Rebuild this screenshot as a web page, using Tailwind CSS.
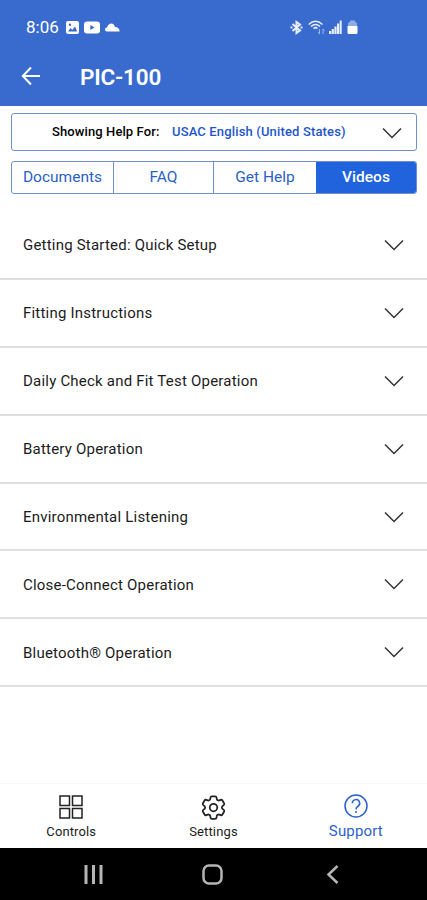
<!DOCTYPE html>
<html lang="en">
  <head>
    <meta charset="UTF-8" />
    <meta name="viewport" content="width=device-width, initial-scale=1.0" />
    <title>PIC-100 Support</title>
    <script src="https://cdn.jsdelivr.net/npm/@tailwindcss/browser@4"></script>
  </head>
  <body class="bg-white font-['Roboto',sans-serif] text-[#1c1c1c]">
    <div class="flex flex-col w-[427px] h-[900px] overflow-hidden">
      <header class="h-[106px] shrink-0 bg-[#396bce] text-white">
        <!-- Status bar -->
        <div class="flex items-center h-[54px] pl-[26px] pr-[69px]">
          <span class="w-[33px] text-[17px] leading-none">8:06</span>
          <svg class="ml-[7px]" width="13" height="13" viewBox="0 0 13 13">
            <rect width="13" height="13" rx="2" fill="#fff" />
            <path d="M2 10.5 4.5 7l1.8 2L9 5.5l2.2 5z" fill="#396bce" />
            <circle cx="4" cy="3.8" r="1.2" fill="#396bce" />
          </svg>
          <svg class="ml-[5px]" width="16" height="13" viewBox="0 0 16 13">
            <rect y="0.5" width="16" height="12" rx="3" fill="#fff" />
            <path d="M6.3 4v5l4.200-2.500z" fill="#396bce" />
          </svg>
          <svg class="ml-[5px]" width="15" height="9" viewBox="0 0 15 9">
            <path d="M2 8.500a2 2 0 0 1 0-4Q3.500 0.500 6.500 0.500 9 0.500 10 4q4.300 0 4.600 4.500z" fill="#fff" />
          </svg>
          <svg class="ml-auto" width="13" height="15" viewBox="0 0 13 15" fill="none" stroke="#e6eefb" stroke-width="2">
            <path d="M2.500 4 10 10.500 6.500 13V2L10 4.500 2.500 11" />
            <path d="M0.500 7.500h2M10.500 7.500h2" />
          </svg>
          <svg class="ml-[5px]" width="17" height="15" viewBox="0 0 17 15" fill="none" stroke="#e6eefb" stroke-width="1.500">
            <path d="M0.700 4.500Q7.500-2 14.500 4.500M3 6.500q4.500-4 9 0M5.500 8.500Q7.500 6.800 9.500 8.500" />
            <path d="M11.500 9v5M9.800 12l1.700 1.700M15 14V9M15 9l1.500 1.500" stroke="#9db8ea" stroke-width="1" />
          </svg>
          <svg class="ml-[4px]" width="13" height="14" viewBox="0 0 13 14" fill="#e6eefb">
            <path d="M0 11h2.200v3H0zM2.700 9h2.200v5H2.700zM5.400 6.500h2.200V14H5.400zM8 3.500h2.200V14H8zM10.700 0.500h2V14h-2z" />
          </svg>
          <svg class="ml-[5px]" width="11" height="14" viewBox="0 0 11 14">
            <path d="M1 6V3.500Q1 2 3 2V0.500h5V2q2 0 2 1.500V6z" fill="#8fade6" />
            <path d="M0.500 6h10v6.500q0 1.500-1.500 1.500H2q-1.500 0-1.500-1.500z" fill="#fff" />
          </svg>
        </div>
        <!-- Title bar -->
        <div class="flex items-center h-[44px] pl-[21px]">
          <svg width="20" height="20" viewBox="0 0 20 20" fill="none" stroke="#fff" stroke-width="2">
            <path d="M19 10H2.500M10 1.500 1.800 10 10 18.500" />
          </svg>
          <h1 class="ml-[39px] mt-[2px] text-[22.500px] font-semibold leading-none tracking-[-0.200px]">PIC-100</h1>
        </div>
      </header>

      <div class="pl-[11px] pr-[10px] pt-[7px] shrink-0">
        <button class="flex items-center w-full h-[38px] border border-[#6f8fce] rounded-[3px] pl-[40px] pr-[14px] text-[13px] font-medium">
          <span class="w-[120px] text-left text-black whitespace-nowrap tracking-[0.1px]">Showing Help For:</span>
          <span class="text-[#1d56cb] whitespace-nowrap tracking-[0.15px]">USAC English (United States)</span>
          <svg class="ml-auto mt-px" width="20" height="12" viewBox="0 0 20 12" fill="none" stroke="#333" stroke-width="1.500">
            <path d="M1 1.500 10 10.500 19 1.500" />
          </svg>
        </button>
        <div class="flex mt-[10px] h-[33px] border border-[#6f8fce] rounded-[3px] text-[15.500px] text-[#2c5fc4] overflow-hidden">
          <button class="w-[102px] border-r border-[#6f8fce]">Documents</button>
          <button class="w-[100px] border-r border-[#6f8fce]">FAQ</button>
          <button class="w-[102px]">Get Help</button>
          <button class="flex-1 bg-[#2063dc] text-white font-medium">Videos</button>
        </div>
      </div>

      <!-- Video topics -->
      <ul class="mt-[18px] flex-1 text-[15px] tracking-[0.21px]">
        <li class="flex items-center justify-between h-[67.900px] pl-[23px] pr-[23px] border-b-2 border-[#dedede]">
          <span class="pt-px">Getting Started: Quick Setup</span>
          <svg width="20" height="12" viewBox="0 0 20 12" fill="none" stroke="#333" stroke-width="1.500"><path d="M1 1.500 10 10.500 19 1.500" /></svg>
        </li>
        <li class="flex items-center justify-between h-[67.900px] pl-[23px] pr-[23px] border-b-2 border-[#dedede]">
          <span class="pt-px">Fitting Instructions</span>
          <svg width="20" height="12" viewBox="0 0 20 12" fill="none" stroke="#333" stroke-width="1.500"><path d="M1 1.500 10 10.500 19 1.500" /></svg>
        </li>
        <li class="flex items-center justify-between h-[67.900px] pl-[23px] pr-[23px] border-b-2 border-[#dedede]">
          <span class="pt-[2px]">Daily Check and Fit Test Operation</span>
          <svg width="20" height="12" viewBox="0 0 20 12" fill="none" stroke="#333" stroke-width="1.500"><path d="M1 1.500 10 10.500 19 1.500" /></svg>
        </li>
        <li class="flex items-center justify-between h-[67.900px] pl-[23px] pr-[23px] border-b-2 border-[#dedede]">
          <span class="pt-[2px]">Battery Operation</span>
          <svg width="20" height="12" viewBox="0 0 20 12" fill="none" stroke="#333" stroke-width="1.500"><path d="M1 1.500 10 10.500 19 1.500" /></svg>
        </li>
        <li class="flex items-center justify-between h-[67.900px] pl-[23px] pr-[23px] border-b-2 border-[#dedede]">
          <span class="pt-[2px]">Environmental Listening</span>
          <svg width="20" height="12" viewBox="0 0 20 12" fill="none" stroke="#333" stroke-width="1.500"><path d="M1 1.500 10 10.500 19 1.500" /></svg>
        </li>
        <li class="flex items-center justify-between h-[67.900px] pl-[23px] pr-[23px] border-b-2 border-[#dedede]">
          <span class="pt-[2px]">Close-Connect Operation</span>
          <svg width="20" height="12" viewBox="0 0 20 12" fill="none" stroke="#333" stroke-width="1.500"><path d="M1 1.500 10 10.500 19 1.500" /></svg>
        </li>
        <li class="flex items-center justify-between h-[67.900px] pl-[23px] pr-[23px] border-b-2 border-[#dedede]">
          <span class="pt-[2px]">Bluetooth® Operation</span>
          <svg width="20" height="12" viewBox="0 0 20 12" fill="none" stroke="#333" stroke-width="1.500"><path d="M1 1.500 10 10.500 19 1.500" /></svg>
        </li>
      </ul>

      <!-- App tabs -->
      <nav class="grid grid-cols-3 h-[65px] shrink-0 border-t border-[#f8f8f8] text-[13px]">
        <a href="#" class="flex flex-col items-center pt-[11px]">
          <svg width="24" height="24" viewBox="0 0 24 24" fill="none" stroke="#222" stroke-width="1.500">
            <path d="M1 1h9.500v9.500H1zM13.500 1H23v9.500h-9.500zM1 13.500h9.500V23H1zM13.500 13.500H23V23h-9.500z" />
          </svg>
          <span class="mt-[5px] leading-[16px] tracking-[0.100px]">Controls</span>
        </a>
        <a href="#" class="flex flex-col items-center pt-[11px]">
          <svg width="25" height="25" viewBox="2 2 20 20" fill="none" stroke="#222" stroke-width="1.400" stroke-linejoin="round">
            <path d="M9.594 3.94c.09-.542.56-.94 1.11-.94h2.593c.55 0 1.02.398 1.11.94l.213 1.281c.063.374.313.686.645.87.074.04.147.083.22.127.325.196.72.257 1.075.124l1.217-.456a1.125 1.125 0 0 1 1.37.49l1.296 2.247a1.125 1.125 0 0 1-.26 1.431l-1.003.827c-.293.241-.438.613-.43.992a7.723 7.723 0 0 1 0 .255c-.008.378.137.75.43.991l1.004.827c.424.35.534.955.26 1.43l-1.298 2.247a1.125 1.125 0 0 1-1.369.491l-1.217-.456c-.355-.133-.75-.072-1.076.124a6.47 6.47 0 0 1-.22.128c-.331.183-.581.495-.644.869l-.213 1.281c-.09.543-.56.94-1.11.94h-2.594c-.55 0-1.019-.398-1.11-.94l-.213-1.281c-.062-.374-.312-.686-.644-.87a6.52 6.52 0 0 1-.22-.127c-.325-.196-.72-.257-1.076-.124l-1.217.456a1.125 1.125 0 0 1-1.369-.49l-1.297-2.247a1.125 1.125 0 0 1 .26-1.431l1.004-.827c.292-.24.437-.613.43-.991a6.932 6.932 0 0 1 0-.255c.007-.38-.138-.751-.43-.992l-1.004-.827a1.125 1.125 0 0 1-.26-1.43l1.297-2.247a1.125 1.125 0 0 1 1.37-.491l1.216.456c.356.133.751.072 1.076-.124.072-.044.146-.086.22-.128.332-.183.582-.495.644-.869l.214-1.28Z" />
            <circle cx="12" cy="12" r="3" />
          </svg>
          <span class="mt-[4px] leading-[16px] tracking-[0.150px]">Settings</span>
        </a>
        <a href="#" class="flex flex-col items-center pt-[10px] text-[#2c62c9]">
          <svg width="24" height="24" viewBox="0 0 24 24" fill="none" stroke="#2c62c9" stroke-width="1.500">
            <circle cx="12" cy="12" r="11" />
            <path d="M8.300 9.300a3.700 3.700 0 1 1 5.500 3.200q-1.800 1-1.800 3M12 17v2" />
          </svg>
          <span class="mt-[4px] text-[15px] leading-[18px] tracking-[0.150px]">Support</span>
        </a>
      </nav>

      <!-- System navigation -->
      <div class="flex items-center justify-between h-[52px] shrink-0 bg-black pl-[84px] pr-[88px]">
        <svg width="19" height="19" viewBox="0 0 19 19" fill="none" stroke="#b5b5b5" stroke-width="3">
          <path d="M2 0v19M9.500 0v19M17 0v19" />
        </svg>
        <svg class="mr-[4px]" width="21" height="21" viewBox="0 0 21 21" fill="none" stroke="#b5b5b5" stroke-width="2.500">
          <rect x="1.500" y="1.500" width="18" height="18" rx="5.500" />
        </svg>
        <svg width="13" height="19" viewBox="0 0 13 19" fill="none" stroke="#b5b5b5" stroke-width="2.500">
          <path d="M11.500 1 2.500 9.500 11.500 18" />
        </svg>
      </div>
    </div>
  </body>
</html>
